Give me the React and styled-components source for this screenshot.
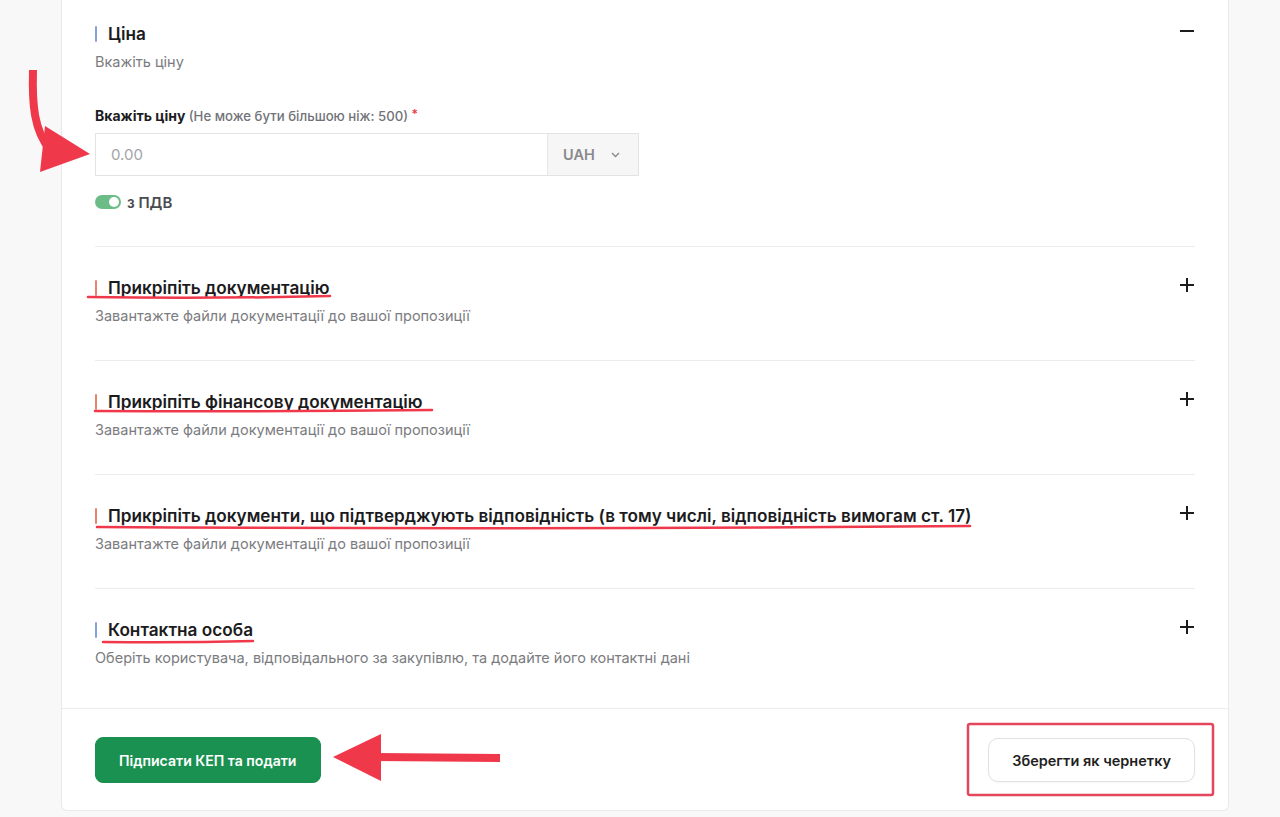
import React from "react";
import styled, { createGlobalStyle } from "styled-components";

const Global = createGlobalStyle`
  html, body { margin: 0; padding: 0; background: #f8f8f8; }
  body { font-family: "Inter", "Noto Sans", sans-serif; color: #1d1d1f; -webkit-font-smoothing: antialiased; }
  * { box-sizing: border-box; }
`;

const Page = styled.div`
  position: relative;
  width: 1280px;
  height: 817px;
  overflow: hidden;
  background: #f8f8f8;
`;

const Card = styled.div`
  margin-left: 61px;
  width: 1168px;
  background: #fff;
  border: 1px solid #e9e9e9;
  border-top: none;
  border-radius: 0 0 6px 6px;
`;

const Body = styled.div`
  padding: 23px 33px 0 33px;
`;

const Section = styled.section`
  padding-top: ${(p) => (p.$first ? "0" : "30px")};
  padding-bottom: ${(p) => (p.$last ? "40px" : p.$first ? "36px" : "34px")};
  border-bottom: ${(p) => (p.$last ? "none" : "1px solid #ececec")};
`;

const HeaderRow = styled.div`
  display: flex;
  justify-content: space-between;
  align-items: flex-start;
`;

const Title = styled.h3`
  margin: 0;
  display: flex;
  align-items: center;
  font-size: 17.2px;
  line-height: 22px;
  font-weight: 600;
  color: #1b1b1d;
  &::before {
    content: "";
    width: 2px;
    height: 16px;
    margin-right: 11px;
    background: ${(p) => p.$marker};
    border-radius: 1px;
  }
`;

const Sub = styled.p`
  margin: 7px 0 0;
  font-size: 14.5px;
  line-height: 20px;
  color: #7b7c80;
`;

const ToggleIcon = styled.button`
  width: 16px;
  height: 16px;
  padding: 0;
  border: none;
  background: none;
  display: flex;
  align-items: center;
  justify-content: center;
  color: #1c1c1c;
`;

const Label = styled.div`
  margin-top: 32px;
  font-size: 14px;
  line-height: 20px;
  font-weight: 700;
  color: #1d1d1f;
  span { font-weight: 500; font-size: 13.2px; color: #727378; }
  em { font-style: normal; color: #ec3b4b; font-weight: 600; font-size: 12px; vertical-align: 3px; }
`;

const InputGroup = styled.div`
  margin-top: 7px;
  display: flex;
  width: 544px;
  height: 43px;
  border: 1px solid #e3e3e3;
`;

const Input = styled.input`
  flex: 1;
  border: none;
  outline: none;
  padding: 0 15px;
  font-family: inherit;
  font-size: 15px;
  color: #333;
  &::placeholder { color: #a3a4a8; }
`;

const Currency = styled.div`
  width: 91px;
  border-left: 1px solid #e6e6e6;
  background: #f6f6f6;
  display: flex;
  align-items: center;
  padding-left: 15px;
  gap: 16px;
  font-size: 14.5px;
  font-weight: 600;
  color: #88898d;
`;

const SwitchRow = styled.label`
  margin-top: 18px;
  display: flex;
  align-items: center;
  gap: 6px;
  height: 16px;
  font-size: 15px;
  font-weight: 600;
  color: #4a4b50;
`;

const Switch = styled.span`
  width: 26px;
  height: 14px;
  border-radius: 7px;
  background: ${(p) => (p.$on ? "#6cbc87" : "#ccc")};
  position: relative;
  &::after {
    content: "";
    position: absolute;
    top: 2px;
    left: ${(p) => (p.$on ? "14px" : "2px")};
    width: 10px;
    height: 10px;
    border-radius: 50%;
    background: #fff;
  }
`;

const Footer = styled.div`
  border-top: 1px solid #ececec;
  padding: 28px 33px 27px;
  display: flex;
  justify-content: space-between;
  align-items: center;
`;

const Button = styled.button`
  height: ${(p) => (p.$primary ? "46px" : "44px")};
  padding: 0 23px;
  border-radius: ${(p) => (p.$primary ? "8px" : "10px")};
  border: 1px solid ${(p) => (p.$primary ? "#1a9150" : "#e1e1e3")};
  background: ${(p) => (p.$primary ? "#1a9150" : "#fff")};
  color: ${(p) => (p.$primary ? "#fff" : "#1f1f22")};
  font-family: inherit;
  font-size: ${(p) => (p.$primary ? "14.1px" : "14.5px")};
  font-weight: 600;
  box-shadow: ${(p) => (p.$primary ? "none" : "0 1px 2px rgba(0,0,0,0.04)")};
`;

const Overlay = styled.svg`
  position: absolute;
  left: 0;
  top: 0;
  pointer-events: none;
`;

const Plus = () => (
  <svg width="16" height="16" viewBox="0 0 16 16">
    <path d="M8 1v14M1 8h14" stroke="currentColor" strokeWidth="2" />
  </svg>
);
const Minus = () => (
  <svg width="16" height="16" viewBox="0 0 16 16">
    <path d="M1 8h14" stroke="currentColor" strokeWidth="2" />
  </svg>
);
const Chevron = () => (
  <svg width="9" height="6" viewBox="0 0 9 6">
    <path d="M1 1l3.5 3.5L8 1" fill="none" stroke="#8a8b8f" strokeWidth="1.4" />
  </svg>
);

const BLUE = "#86a3d9";
const RED = "#e7836f";

const sections = [
  { title: "Прикріпіть документацію", sub: "Завантажте файли документації до вашої пропозиції", marker: RED },
  { title: "Прикріпіть фінансову документацію", sub: "Завантажте файли документації до вашої пропозиції", marker: RED },
  {
    title: "Прикріпіть документи, що підтверджують відповідність (в тому числі, відповідність вимогам ст. 17)",
    sub: "Завантажте файли документації до вашої пропозиції",
    marker: RED,
  },
  {
    title: "Контактна особа",
    sub: "Оберіть користувача, відповідального за закупівлю, та додайте його контактні дані",
    marker: BLUE,
  },
];

const A = "#f0384b";

export default function App() {
  return (
    <Page>
      <Global />
      <Card>
        <Body>
          <Section $first>
            <HeaderRow>
              <Title $marker={BLUE}>Ціна</Title>
              <ToggleIcon aria-label="collapse"><Minus /></ToggleIcon>
            </HeaderRow>
            <Sub>Вкажіть ціну</Sub>
            <Label>
              Вкажіть ціну <span>(Не може бути більшою ніж: 500)</span> <em>*</em>
            </Label>
            <InputGroup>
              <Input placeholder="0.00" />
              <Currency>UAH <Chevron /></Currency>
            </InputGroup>
            <SwitchRow>
              <Switch $on />з ПДВ
            </SwitchRow>
          </Section>
          {sections.map((s, i) => (
            <Section key={i} $last={i === sections.length - 1}>
              <HeaderRow>
                <Title $marker={s.marker}>{s.title}</Title>
                <ToggleIcon aria-label="expand"><Plus /></ToggleIcon>
              </HeaderRow>
              <Sub>{s.sub}</Sub>
            </Section>
          ))}
        </Body>
        <Footer>
          <Button $primary>Підписати КЕП та подати</Button>
          <Button>Зберегти як чернетку</Button>
        </Footer>
      </Card>
      <Overlay width="1280" height="817" viewBox="0 0 1280 817">
        <path d="M33 70 C 32 105, 34 130, 50 150" fill="none" stroke={A} strokeWidth="8" />
        <path d="M45 126 L90 154 L40 172 Z" fill={A} />
        <path d="M376 757 L500 758" stroke={A} strokeWidth="8" />
        <path d="M333 757 L381 734 L381 781 Z" fill={A} />
        <path d="M88 297 Q 210 299 330 296" fill="none" stroke={A} strokeWidth="2.5" strokeLinecap="round" />
        <path d="M95 411 Q 260 412 432 410" fill="none" stroke={A} strokeWidth="2.5" strokeLinecap="round" />
        <path d="M97 527 Q 530 530 970 526" fill="none" stroke={A} strokeWidth="2.5" strokeLinecap="round" />
        <path d="M103 642 Q 180 643 253 641" fill="none" stroke={A} strokeWidth="2.5" strokeLinecap="round" />
        <rect x="968" y="724" width="245" height="71" rx="2" fill="none" stroke="#e4475b" strokeWidth="2.5" />
      </Overlay>
    </Page>
  );
}
